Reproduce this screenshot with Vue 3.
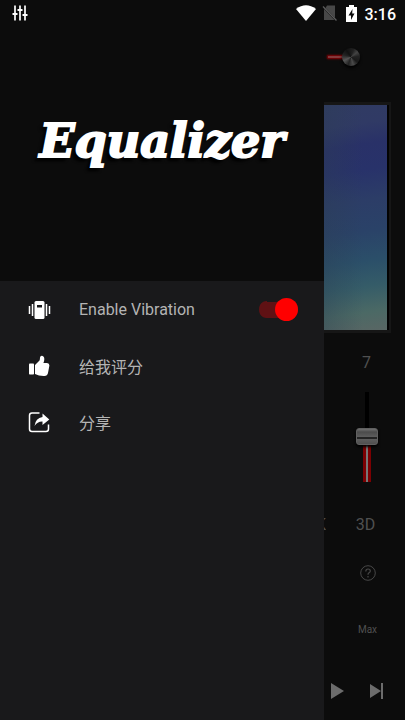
<script setup>
import { ref } from 'vue'

const vibration = ref(true)
const power = ref(true)
const level = ref(51)
</script>

<template>
  <div class="app">
    <header class="status">
      <svg class="status-eq" viewBox="0 0 16 16" width="16" height="16" aria-hidden="true">
        <path d="M3 0.500v15M8 0.500v15M13 0.500v15" stroke="#fff" stroke-width="1.7" />
        <path d="M0.500 9h5M5.500 5h5M10.500 10h5" stroke="#fff" stroke-width="2" />
      </svg>
      <svg class="wifi" viewBox="0 0 20 16" width="20" height="16" aria-hidden="true">
        <path d="M0 4Q10-3.500 20 4L10 16Z" fill="#fff" />
      </svg>
      <svg class="sim" viewBox="0 0 16 16" width="16" height="16" aria-hidden="true">
        <path d="M5 .5H13V13L3.500 3ZM2 4L12.500 15H2Z" fill="#484848" />
        <path d="M1 1.500L14.500 15.500" stroke="#5c5c5c" stroke-width="1.300" />
      </svg>
      <svg class="battery" viewBox="0 0 11 17" width="11" height="17" aria-hidden="true">
        <path d="M3 0h5v2h3v15H0V2H3Z" fill="#fff" />
        <path d="M6.500 4L2.500 10.500H5V15L8.500 8.500H6.200Z" fill="#0c0c0c" />
      </svg>
      <time class="clock">3:16</time>
    </header>

    <div class="body">
      <aside class="drawer">
        <div class="banner">
          <h1 class="logo">Equalizer</h1>
        </div>
        <nav class="menu">
          <label class="item" for="vibration">
            <svg class="icon" viewBox="0 0 24 24" width="24" height="24" aria-hidden="true">
              <rect x="7.500" y="3" width="10" height="18" rx="1.500" fill="#fff" />
              <rect x="10" y="7" width="5" height="2.500" fill="#19191b" />
              <path d="M5.500 6v12M19.500 6v12" stroke="#fff" stroke-width="1.500" />
              <path d="M2.500 8v8M22.500 8v8" stroke="#fff" stroke-width="1.500" />
            </svg>
            <span class="text">Enable Vibration</span>
            <input id="vibration" v-model="vibration" class="switch" type="checkbox" />
          </label>
          <a class="item" href="#rate">
            <svg class="icon" viewBox="0 0 24 24" width="24" height="24" fill="#fff" aria-hidden="true">
              <rect x="2" y="9.500" width="5" height="11" rx="0.800" />
              <path d="M8 11L12.500 6.500Q13 5.500 13 3.500Q13.300 1.500 15 1.700Q17.500 2.300 17.300 5.500Q17.200 7.300 16.400 9H20Q22.500 9.200 22.400 11.500L21 19Q20.300 22 17.500 22Q12 22.200 8 20Z" />
            </svg>
            <span class="text">给我评分</span>
          </a>
          <a class="item" href="#share">
            <svg class="icon" viewBox="0 0 24 24" width="24" height="24" aria-hidden="true">
              <path d="M12.500 3H5Q2.500 3 2.500 5.500V19Q2.500 21.500 5 21.500H19Q21.500 21.500 21.500 19V14.500" fill="none" stroke="#fff" stroke-width="1.500" />
              <path d="M15.500 3.500L22.300 9.500L15.500 15V11.500Q10.500 11.300 7.500 16Q8.500 8 15.500 7Z" fill="#fff" />
            </svg>
            <span class="text">分享</span>
          </a>
        </nav>
      </aside>

      <main class="panel">
        <div class="power-row">
          <input v-model="power" class="power" type="checkbox" aria-label="Power" />
        </div>
        <div class="screen"></div>
        <div class="channel">
          <label class="value" for="band">7</label>
          <input id="band" v-model="level" class="fader" type="range" min="0" max="100" />
        </div>
        <div class="modes">
          <span class="cut">K</span>
          <button class="mode" type="button">3D</button>
        </div>
        <button class="tool" type="button" aria-label="Help">
          <svg viewBox="0 0 16 16" width="16" height="16" fill="none" stroke="#484848" aria-hidden="true">
            <circle cx="8" cy="8" r="7.300" />
            <path d="M5.800 6.500Q5.800 4 8 4Q10.300 4 10.300 6Q10.300 7.100 9 7.800Q8 8.400 8 9.800M8 11v1.500" stroke-width="1.200" />
          </svg>
        </button>
        <button class="tool" type="button">Max</button>
        <div class="transport">
          <button type="button" aria-label="Play">
            <svg viewBox="0 0 14 16" width="14" height="16" aria-hidden="true"><path d="M0 0L13 8L0 16Z" fill="#6c6c6c" /></svg>
          </button>
          <button type="button" aria-label="Next">
            <svg viewBox="0 0 14 16" width="14" height="16" aria-hidden="true"><path d="M0 1L11 8L0 15ZM11 0h2v16h-2Z" fill="#6c6c6c" /></svg>
          </button>
        </div>
      </main>
    </div>
  </div>
</template>

<style>
body {
  background: #0c0c0c;
}
</style>

<style scoped>
.app {
  display: flex;
  flex-direction: column;
  min-height: 100vh;
  background: #0c0c0c;
  color: #b4b4b4;
  font-family: Roboto, "Noto Sans CJK SC", sans-serif;
}
.app * {
  box-sizing: border-box;
}
button {
  padding: 0;
  border: 0;
  background: none;
  color: #505050;
  font: inherit;
}
svg {
  display: block;
}
.status {
  display: flex;
  align-items: center;
  height: 28px;
  padding: 0 9px 0 12px;
}
.status-eq,
.wifi,
.sim,
.battery {
  margin-bottom: 2px;
}
.wifi {
  margin-left: auto;
}
.sim {
  margin-left: 6px;
}
.battery {
  margin-left: 8px;
}
.clock {
  margin-left: 8px;
  color: #fff;
  font-size: 16px;
  font-weight: 500;
}
.body {
  flex: 1;
  display: grid;
  grid-template-columns: 4fr 1fr;
}
.drawer {
  display: flex;
  flex-direction: column;
  min-width: 0;
}
.banner {
  display: flex;
  align-items: center;
  justify-content: center;
  height: 253px;
  padding-bottom: 28px;
}
.logo {
  margin: 0;
  color: #fff;
  font: italic 700 46px/52px "DejaVu Serif", serif;
  -webkit-text-stroke: 2px #fff;
  stroke-linejoin: round;
  text-shadow: -4px 4px 3px #000;
}
.menu {
  flex: 1;
  background: #19191b;
}
.item {
  display: flex;
  align-items: center;
  height: 56px;
  padding: 0 26px 0 27px;
  color: inherit;
  text-decoration: none;
  font-size: 16px;
}
.menu .item:first-child {
  height: 57px;
}
.text {
  flex: 1;
  margin-left: 28px;
}
.switch {
  display: flex;
  align-items: center;
  justify-content: flex-end;
  appearance: none;
  width: 39px;
  height: 23px;
  margin: 0;
  background: radial-gradient(circle at 8px 50%, #5f1114 8px, transparent 9px) left / 8px 100% no-repeat,
    linear-gradient(#5f1114, #5f1114) right / 31px 16px no-repeat;
  border-radius: 12px;
}
.switch::before {
  content: "";
  width: 23px;
  height: 23px;
  border-radius: 50%;
  background: #f00;
}
.panel {
  display: flex;
  flex-direction: column;
  min-width: 0;
  overflow: hidden;
}
.power-row {
  height: 74px;
  padding: 20px 0 0 4px;
}
.power {
  display: flex;
  align-items: center;
  appearance: none;
  width: 33px;
  height: 18px;
  margin: 0;
}
.power::before {
  content: "";
  width: 16px;
  height: 2px;
  background: #83383a;
  box-shadow: 0 0 2px 1px #8b0005;
}
.power::after {
  content: "";
  flex: none;
  width: 18px;
  height: 18px;
  margin-left: -2px;
  border-radius: 50%;
  background: conic-gradient(from 20deg, #222, #444, #222 18%, #191919 30%, #4a4a4a 40%, #222 50%, #555 62%, #222 74%, #111 85%, #222);
  box-shadow: 0 2px 3px #000;
}
.screen {
  height: 231px;
  margin-right: 14px;
  border: solid #161616;
  border-width: 3px 2px 3px 0;
  background:
    linear-gradient(90deg, transparent calc(100% - 2px), #030303 0),
    linear-gradient(90deg, rgba(44, 62, 80, 0.35), transparent 60%),
    linear-gradient(172deg, #303b63 0%, #303a65 10%, #293168 19%, #28326a 30%, #2c3d67 43%, #2a4268 56%, #2b4f69 69%, #355c68 80%, #4b6965 91%, #596664 100%);
}
.channel {
  display: flex;
  flex-direction: column;
  align-items: center;
  padding-left: 4px;
}
.value {
  height: 59px;
  color: #505050;
  font-size: 16px;
  line-height: 59px;
}
.fader {
  appearance: none;
  writing-mode: vertical-lr;
  direction: rtl;
  width: 22px;
  height: 90px;
  margin: 0;
  background:
    linear-gradient(90deg, #7c0002 3px, #777 3px 5px, #7c0002 5px) center bottom / 8px 40px no-repeat,
    linear-gradient(#000, #000) center top / 4px 50px no-repeat;
}
.fader::-webkit-slider-thumb {
  appearance: none;
  width: 22px;
  height: 17px;
  border: 1px solid #606060;
  border-radius: 3px;
  background: linear-gradient(#707070, #4c4c4c 20%, #5c5c5c 50%, #242424 54% 66%, #5c5c5c 70%, #505050);
  box-shadow: 0 2px 3px #000;
}
.modes {
  display: flex;
  align-items: center;
  height: 42px;
  margin-top: 21px;
  color: #505050;
  font-size: 16px;
}
.cut {
  display: flex;
  justify-content: flex-end;
  width: 2px;
  overflow: hidden;
}
.mode {
  flex: 1;
}
.tool {
  display: flex;
  align-items: center;
  justify-content: center;
  height: 56px;
  padding-left: 6px;
  font-size: 10px;
}
.transport {
  display: flex;
  align-items: center;
  gap: 25px;
  height: 57px;
  margin-top: 5px;
  padding-left: 7px;
}
</style>
